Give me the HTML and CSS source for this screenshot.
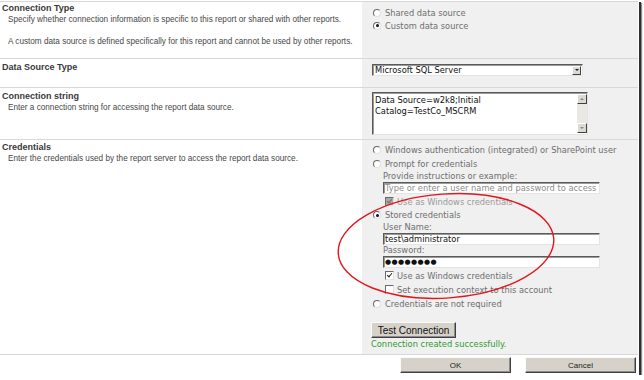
FILE: index.html
```html
<!DOCTYPE html>
<html lang="en">
<head>
    <meta charset="UTF-8">
    <title>Data Source Properties</title>
    <link rel="stylesheet" href="styles.css">
</head>
<body>
    <div class="dialog">

        <!-- Connection type -->
        <div class="row row-type">
            <div class="label-cell">
                <h4>Connection Type</h4>
                <p>Specify whether connection information is specific to this report or shared with other reports.</p>
                <p class="gap">A custom data source is defined specifically for this report and cannot be used by other reports.</p>
            </div>
            <div class="field-cell">
                <div class="option"><span class="radio"></span>Shared data source</div>
                <div class="option"><span class="radio checked"></span>Custom data source</div>
            </div>
        </div>

        <!-- Data source type -->
        <div class="row row-source">
            <div class="label-cell">
                <h4>Data Source Type</h4>
            </div>
            <div class="field-cell">
                <div class="select">
                    <span class="select-text">Microsoft SQL Server</span>
                    <span class="arrow-btn"><span class="tri down"></span></span>
                </div>
            </div>
        </div>

        <!-- Connection string -->
        <div class="row row-conn">
            <div class="label-cell">
                <h4>Connection string</h4>
                <p>Enter a connection string for accessing the report data source.</p>
            </div>
            <div class="field-cell">
                <div class="textarea">
                    <div class="textarea-text">Data Source=w2k8;Initial Catalog=TestCo_MSCRM</div>
                    <div class="scrollbar">
                        <span class="arrow-btn"><span class="tri up"></span></span>
                        <span class="track"></span>
                        <span class="arrow-btn"><span class="tri down"></span></span>
                    </div>
                </div>
            </div>
        </div>

        <!-- Credentials -->
        <div class="row row-cred">
            <div class="label-cell">
                <h4>Credentials</h4>
                <p>Enter the credentials used by the report server to access the report data source.</p>
            </div>
            <div class="field-cell">
                <div class="option"><span class="radio"></span>Windows authentication (integrated) or SharePoint user</div>
                <div class="option"><span class="radio"></span>Prompt for credentials</div>
                <div class="sub">
                    <div class="field-label">Provide instructions or example:</div>
                    <div class="textbox hint">Type or enter a user name and password to access</div>
                    <div class="check-option disabled"><span class="checkbox checked"></span>Use as Windows credentials</div>
                </div>
                <div class="option"><span class="radio checked"></span>Stored credentials</div>
                <div class="sub">
                    <div class="field-label">User Name:</div>
                    <div class="textbox">test\administrator</div>
                    <div class="field-label">Password:</div>
                    <div class="textbox password">&#9679;&#9679;&#9679;&#9679;&#9679;&#9679;&#9679;&#9679;</div>
                    <div class="check-option"><span class="checkbox checked"></span>Use as Windows credentials</div>
                    <div class="check-option"><span class="checkbox"></span>Set execution context to this account</div>
                </div>
                <div class="option last"><span class="radio"></span>Credentials are not required</div>
                <button class="test-btn">Test Connection</button>
                <div class="status">Connection created successfully.</div>
            </div>
        </div>

        <div class="footer">
            <button class="dlg-btn">OK</button>
            <button class="dlg-btn">Cancel</button>
        </div>

        <!-- hand drawn highlight -->
        <svg class="highlight" width="639" height="375" viewBox="0 0 639 375">
            <ellipse cx="446" cy="246" rx="108" ry="52" transform="rotate(-4 446 246)" fill="none" stroke="#e3151d" stroke-width="1.4"/>
        </svg>
    </div>
</body>
</html>
```

FILE: styles.css
```css
body {
    margin: 0;
    background: #fff;
}
.dialog {
    position: relative;
    width: 639px;
    height: 375px;
    box-sizing: border-box;
    padding: 1px 1px 0 0;
    background: #fff;
    box-shadow: 2px 2px 0 #2e2e2e, 3px 3px 1px #8a8a8a;
}
.row {
    display: grid;
    grid-template-columns: 362px 276px;
    border-top: 1px solid #d8d8d8;
    box-sizing: border-box;
}
.row-type { height: 57px; }
.row-source { height: 29px; }
.row-conn { height: 52px; }
.row-cred { height: 215px; }

/* left column */
.label-cell {
    padding: 3px 2px 0 2px;
}
.row-type .label-cell { padding-top: 1px; }
.row-cred .label-cell { padding-top: 2px; }
.label-cell h4 {
    margin: 0;
    font: bold 9px/11px "Liberation Sans", Arial, sans-serif;
    color: #3a3a3a;
}
.label-cell p {
    margin: 0;
    padding-left: 6px;
    font: 8.2px/11px "Liberation Sans", Arial, sans-serif;
    color: #474747;
}
.label-cell p.gap {
    margin-top: 11px;
}

/* right column */
.field-cell {
    background: #f0f0f0;
    padding-left: 11px;
    font: 8.3px "DejaVu Sans", Verdana, sans-serif;
    color: #6e6e6e;
}
.row-type .field-cell { padding-top: 4px; }
.row-source .field-cell { padding-top: 5px; padding-left: 10px; }
.row-conn .field-cell { padding-top: 4px; padding-left: 10px; }
.row-cred .field-cell { padding-top: 3px; }

.option {
    display: flex;
    align-items: center;
    gap: 4px;
    height: 13px;
}
.row-cred .option { height: 14px; }
.option.last { margin-top: 1px; }

.radio {
    width: 8px;
    height: 8px;
    box-sizing: border-box;
    border-radius: 50%;
    border: 1px solid;
    border-color: #6a6a6a #e0e0e0 #e0e0e0 #6a6a6a;
    background: #fff;
    display: flex;
    align-items: center;
    justify-content: center;
}
.radio.checked::after {
    content: "";
    width: 3px;
    height: 3px;
    border-radius: 50%;
    background: #111;
}

.sub {
    padding-left: 10px;
}
.field-label {
    line-height: 11px;
    height: 11px;
}
.textbox {
    width: 217px;
    height: 12px;
    box-sizing: border-box;
    border: 1px solid;
    border-color: #5a5a5a #e4e4e4 #e4e4e4 #5a5a5a;
    box-shadow: inset 1px 1px 0 #9a9a9a;
    background: #fff;
    padding-left: 1px;
    line-height: 10px;
    color: #111;
    white-space: nowrap;
    overflow: hidden;
}
.textbox.hint {
    color: #8c8c8c;
}
.textbox.password {
    font-size: 7px;
    letter-spacing: 0.4px;
    font-weight: bold;
}
.check-option {
    display: flex;
    align-items: center;
    gap: 3px;
    height: 13px;
    margin-top: 1px;
    padding-left: 2px;
}
.check-option.disabled {
    color: #9a9a9a;
}
.checkbox {
    width: 9px;
    height: 9px;
    box-sizing: border-box;
    border: 1px solid;
    border-color: #6a6a6a #e4e4e4 #e4e4e4 #6a6a6a;
    background: #fff;
    position: relative;
}
.checkbox.checked::after {
    content: "";
    position: absolute;
    left: 2px;
    top: 0;
    width: 2px;
    height: 4px;
    border: solid #222;
    border-width: 0 1.5px 1.5px 0;
    transform: rotate(40deg);
}
.disabled .checkbox {
    background: #a9a9a9;
}
.disabled .checkbox.checked::after {
    border-color: #6d6d6d;
}

/* select and textarea */
.select {
    display: flex;
    align-items: center;
    width: 211px;
    height: 12px;
    box-sizing: border-box;
    border: 1px solid;
    border-color: #5a5a5a #e4e4e4 #e4e4e4 #5a5a5a;
    box-shadow: inset 1px 1px 0 #9a9a9a;
    background: #fff;
    color: #111;
}
.select-text {
    flex: 1;
    padding-left: 2px;
    line-height: 10px;
}
.arrow-btn {
    width: 9px;
    height: 9px;
    box-sizing: border-box;
    background: #dcdad4;
    border: 1px solid;
    border-color: #fff #404040 #404040 #fff;
    display: flex;
    align-items: center;
    justify-content: center;
    margin-right: 1px;
}
.tri {
    width: 0;
    height: 0;
    border-left: 2px solid transparent;
    border-right: 2px solid transparent;
}
.tri.down { border-top: 2px solid #222; }
.tri.up { border-bottom: 2px solid #888; }
.textarea .tri.down { border-top-color: #888; }

.textarea {
    display: flex;
    width: 216px;
    height: 43px;
    box-sizing: border-box;
    border: 1px solid;
    border-color: #5a5a5a #e4e4e4 #e4e4e4 #5a5a5a;
    box-shadow: inset 1px 1px 0 #9a9a9a;
    background: #fff;
    color: #111;
}
.textarea-text {
    flex: 1;
    padding: 2px 0 0 2px;
    line-height: 11px;
}
.scrollbar {
    display: flex;
    flex-direction: column;
    width: 10px;
    padding: 1px 0;
}
.scrollbar .arrow-btn {
    width: 10px;
    height: 10px;
}
.scrollbar .track {
    flex: 1;
    background: #eae8e2;
}

/* buttons */
.test-btn {
    display: block;
    margin: 11px 0 0 -2px;
    width: 85px;
    height: 16px;
    padding: 0;
    background: #d6d2ca;
    border: 1px solid;
    border-color: #fafafa #404040 #404040 #fafafa;
    box-shadow: inset -1px -1px 0 #8c8c8c;
    font: 10px "Liberation Sans", Arial, sans-serif;
    color: #111;
}
.status {
    margin-left: -2px;
    line-height: 12px;
    color: #2f9a2f;
}
.footer {
    display: flex;
    justify-content: flex-end;
    gap: 14px;
    border-top: 1px solid #d8d8d8;
    padding: 2px 2px 0 0;
}
.dlg-btn {
    width: 111px;
    height: 16px;
    padding: 0;
    background: #d6d2ca;
    border: 1px solid;
    border-color: #fafafa #404040 #404040 #fafafa;
    box-shadow: inset -1px -1px 0 #8c8c8c;
    font: 8px "Liberation Sans", Arial, sans-serif;
    color: #222;
}

.highlight {
    position: absolute;
    left: 0;
    top: 0;
    pointer-events: none;
}
```
